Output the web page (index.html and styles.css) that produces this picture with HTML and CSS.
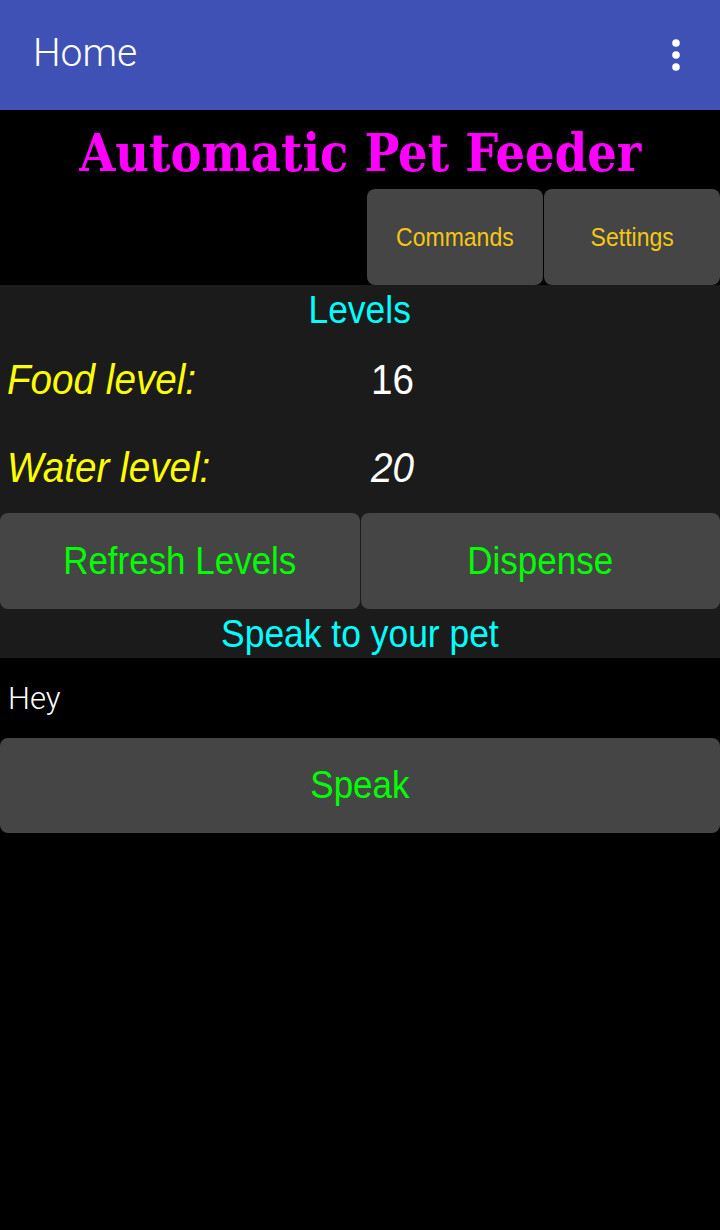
FILE: index.html
```html
<!DOCTYPE html>
<html>
<head>
<meta charset="utf-8">
<link rel="stylesheet" href="styles.css">
</head>
<body>
<div class="appbar">
  <span class="appbar-title">Home</span>
  <svg class="menu" width="10" height="34" viewBox="0 0 10 34"><circle cx="5" cy="5" r="3.8" fill="#fff"/><circle cx="5" cy="17" r="3.8" fill="#fff"/><circle cx="5" cy="29" r="3.8" fill="#fff"/></svg>
</div>
<div class="title"><span class="title-text">Automatic Pet Feeder</span></div>
<div class="top-actions">
  <div class="btn btn-small"><span class="sx">Commands</span></div>
  <div class="btn btn-small"><span class="sx">Settings</span></div>
</div>
<div class="levels">
  <div class="heading"><span class="sx">Levels</span></div>
  <div class="row row-food">
    <span class="label"><span class="sx">Food level:</span></span>
    <span class="value"><span class="sx">16</span></span>
  </div>
  <div class="row row-water">
    <span class="label"><span class="sx">Water level:</span></span>
    <span class="value italic"><span class="sx">20</span></span>
  </div>
  <div class="btn-row">
    <div class="btn btn-big"><span class="sx">Refresh Levels</span></div>
    <div class="btn btn-big"><span class="sx">Dispense</span></div>
  </div>
  <div class="heading heading-speak"><span class="sx">Speak to your pet</span></div>
</div>
<div class="input-area"><span class="input-text">Hey</span></div>
<div class="btn btn-big btn-full"><span class="sx">Speak</span></div>
</body>
</html>
```
FILE: styles.css
```css
html, body {
  margin: 0;
  padding: 0;
  background: #000;
}
body {
  width: 720px;
  height: 1230px;
  font-family: "Liberation Sans", Arial, sans-serif;
  overflow: hidden;
}
.sx {
  display: inline-block;
  transform: scaleX(0.92);
}
.appbar {
  height: 110px;
  background: #3f51b5;
  display: flex;
  align-items: center;
  justify-content: space-between;
  padding: 0 39px 0 33px;
  box-sizing: border-box;
}
.appbar-title {
  font-family: Roboto, "Liberation Sans", sans-serif;
  font-weight: 300;
  font-size: 39px;
  color: #fff;
  margin-top: -4px;
}
.menu {
  margin-top: 0;
}
.title {
  height: 79px;
  display: flex;
  align-items: center;
  justify-content: center;
}
.title-text {
  display: inline-block;
  font-family: "DejaVu Serif Condensed", "DejaVu Serif", serif;
  font-weight: bold;
  font-size: 53px;
  color: #ff00ff;
  margin-top: 4px;
  transform: scaleX(0.975);
}
.top-actions {
  height: 96px;
  display: flex;
  justify-content: flex-end;
  gap: 1px;
}
.btn {
  background: #454545;
  border-radius: 8px;
  display: flex;
  align-items: center;
  justify-content: center;
}
.btn-small {
  width: 176px;
  font-size: 25px;
  color: #f3c714;
}
.levels {
  background: #1b1b1b;
  height: 373px;
  display: flex;
  flex-direction: column;
}
.heading {
  height: 50px;
  display: flex;
  align-items: center;
  justify-content: center;
  font-size: 38.5px;
  color: #00ffff;
}
.row {
  display: grid;
  grid-template-columns: 364px 1fr;
  padding-left: 7px;
  align-items: center;
  font-size: 42px;
}
.row-food {
  height: 88px;
  margin-top: 1px;
}
.row-water {
  height: 88px;
}
.label {
  color: #ffff00;
  font-style: italic;
}
.label .sx, .value .sx {
  transform-origin: left center;
}
.value {
  color: #fff;
}
.italic {
  font-style: italic;
}
.btn-row {
  display: flex;
  gap: 1px;
  height: 96px;
  margin-top: 1px;
}
.btn-big {
  flex: 1;
  font-size: 38px;
  color: #00ff00;
}
.heading-speak {
  height: 49px;
}
.input-area {
  height: 80px;
  display: flex;
  align-items: center;
  padding-left: 8px;
}
.input-text {
  font-family: Roboto, "Liberation Sans", sans-serif;
  font-weight: 300;
  font-size: 31px;
  color: #fff;
}
.btn-full {
  height: 95px;
}
```
